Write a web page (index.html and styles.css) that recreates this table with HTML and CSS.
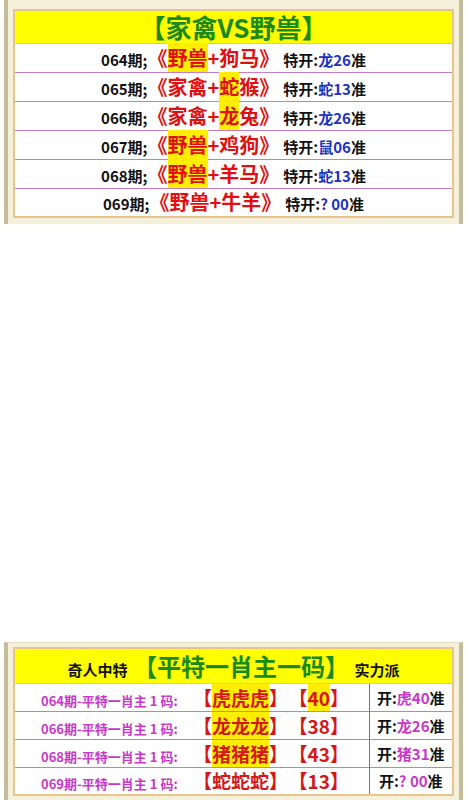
FILE: index.html
```html
<!DOCTYPE html>
<html lang="zh">
  <head>
    <meta charset="UTF-8" />
    <meta name="viewport" content="width=device-width, initial-scale=1.0" />
    <title>家禽VS野兽</title>
    <link rel="stylesheet" href="styles.css">
  </head>
  <body>
    <div class="frame top">
      <table class="grid">
        <thead>
          <tr><td class="head">【家禽VS野兽】</td></tr>
        </thead>
        <tbody>
          <tr><td>064期;<span class="pick">《<em>野兽</em>+狗马》</span>特开:<span class="blue">龙26</span>准</td></tr>
          <tr><td>065期;<span class="pick">《家禽+<em>蛇</em>猴》</span>特开:<span class="blue">蛇13</span>准</td></tr>
          <tr><td>066期;<span class="pick">《家禽+<em>龙</em>兔》</span>特开:<span class="blue">龙26</span>准</td></tr>
          <tr><td>067期;<span class="pick">《<em>野兽</em>+鸡狗》</span>特开:<span class="blue">鼠06</span>准</td></tr>
          <tr><td>068期;<span class="pick">《<em>野兽</em>+羊马》</span>特开:<span class="blue">蛇13</span>准</td></tr>
          <tr><td>069期;<span class="pick">《野兽+牛羊》</span>特开:<span class="blue">? 00</span>准</td></tr>
        </tbody>
      </table>
    </div>

    <div class="frame bottom">
      <table class="grid code">
        <thead>
          <tr>
            <td class="head" colspan="2"><span class="small">奇人中特</span> 【平特一肖主一码】 <span class="small">实力派</span></td>
          </tr>
        </thead>
        <tbody>
          <tr>
            <td class="main"><span class="label">064期-平特一肖主 1 码:</span><span class="pick">【<em>虎虎虎</em>】</span><span class="pick">【<em>40</em>】</span></td>
            <td class="open">开:<span class="pink">虎40</span>准</td>
          </tr>
          <tr>
            <td class="main"><span class="label">066期-平特一肖主 1 码:</span><span class="pick">【<em>龙龙龙</em>】</span><span class="pick">【38】</span></td>
            <td class="open">开:<span class="pink">龙26</span>准</td>
          </tr>
          <tr>
            <td class="main"><span class="label">068期-平特一肖主 1 码:</span><span class="pick">【<em>猪猪猪</em>】</span><span class="pick">【43】</span></td>
            <td class="open">开:<span class="pink">猪31</span>准</td>
          </tr>
          <tr>
            <td class="main"><span class="label">069期-平特一肖主 1 码:</span><span class="pick">【蛇蛇蛇】</span><span class="pick">【13】</span></td>
            <td class="open">开:<span class="pink">? 00</span>准</td>
          </tr>
        </tbody>
      </table>
    </div>
  </body>
</html>
```

FILE: styles.css
```css
* {
  font-family: "Noto Sans CJK SC", "Noto Sans", sans-serif;
  box-sizing: border-box;
}
body {
  margin: 0;
  background-color: #ffffff;
}
.frame {
  margin: 0 4px;
  border-left: 4px solid #c4bc9c;
  border-right: 4px solid #c4bc9c;
  background-color: #f5f0da;
  padding: 9px 5px 6px;
}
.bottom {
  margin-top: 418px;
  padding-top: 4px;
  border-top: 1px solid #e6dcc0;
}
.grid {
  width: 100%;
  border-collapse: collapse;
  border: 2px solid #e8c48e;
  background-color: #ffffff;
}
.grid td {
  border-top: 1px solid #c77cc7;
  height: 29px;
  padding: 0;
  text-align: center;
  font-size: 15px;
  font-weight: bold;
  color: #111111;
  line-height: 1;
  white-space: nowrap;
}
.grid .head {
  background-color: #ffff00;
  height: 33px;
  color: #1a8a1a;
  font-size: 26px;
  border-top: none;
  border-bottom: 1px solid #e8c48e;
}
.pick {
  color: #e01010;
  font-size: 20px;
  margin-right: 4px;
}
em {
  font-style: normal;
  background-color: #ffee00;
}
.blue {
  color: #2030c0;
}
.code td {
  height: 28px;
}
.code .head {
  height: 35px;
  font-size: 24px;
}
.small {
  color: #111111;
  font-size: 15px;
}
.code .main {
  width: 355px;
  border-right: 1px solid #8a6a8a;
  text-align: left;
  padding-left: 26px;
}
.label {
  display: inline-block;
  width: 152px;
  color: #c838c8;
  font-size: 13px;
}
.code .pick {
  color: #d41818;
  font-size: 19px;
  margin-right: 10px;
}
.open {
  font-size: 14px;
}
.pink {
  color: #c838c8;
}
```
